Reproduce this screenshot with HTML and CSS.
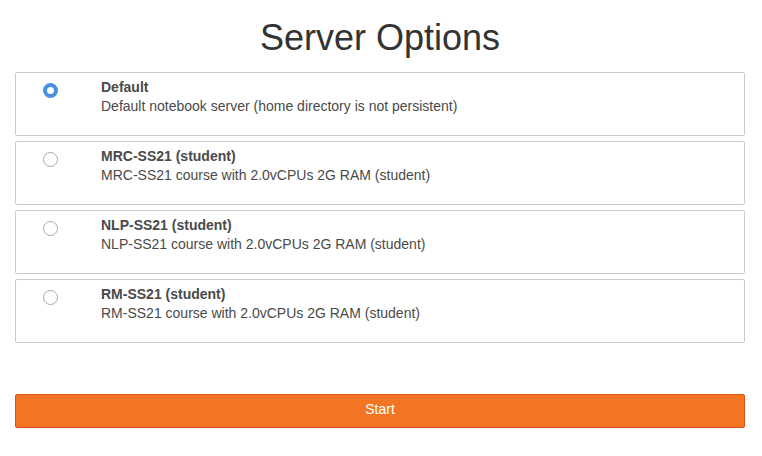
FILE: index.html
```html
<!DOCTYPE html>
<html>
<head>
<meta charset="utf-8">
<link rel="stylesheet" href="styles.css">
</head>
<body>
<div class="container">
  <h1 class="title">Server Options</h1>
  <form class="options">
    <label class="option">
      <span class="radio checked"></span>
      <span class="text">
        <strong class="name">Default</strong>
        <span class="desc">Default notebook server (home directory is not persistent)</span>
      </span>
    </label>
    <label class="option">
      <span class="radio"></span>
      <span class="text">
        <strong class="name">MRC-SS21 (student)</strong>
        <span class="desc">MRC-SS21 course with 2.0vCPUs 2G RAM (student)</span>
      </span>
    </label>
    <label class="option">
      <span class="radio"></span>
      <span class="text">
        <strong class="name">NLP-SS21 (student)</strong>
        <span class="desc">NLP-SS21 course with 2.0vCPUs 2G RAM (student)</span>
      </span>
    </label>
    <label class="option">
      <span class="radio"></span>
      <span class="text">
        <strong class="name">RM-SS21 (student)</strong>
        <span class="desc">RM-SS21 course with 2.0vCPUs 2G RAM (student)</span>
      </span>
    </label>
    <button type="button" class="start">Start</button>
  </form>
</div>
</body>
</html>
```

FILE: styles.css
```css
* { box-sizing: border-box; }
html, body {
  margin: 0;
  padding: 0;
  background: #fff;
}
body {
  font-family: "Liberation Sans", Arial, Helvetica, sans-serif;
  font-size: 14px;
  line-height: 20px;
  color: #333;
}
.container {
  padding: 0 17px 0 15px;
}
.title {
  margin: 18px 0 14px;
  font-size: 36px;
  line-height: 40px;
  font-weight: 400;
  text-align: center;
  color: #333;
}
.options {
  display: flex;
  flex-direction: column;
  gap: 5px;
}
.option {
  display: flex;
  align-items: flex-start;
  height: 64px;
  border: 1px solid #ccc;
  border-radius: 2px;
  padding: 4px 0 0 0;
}
.radio {
  flex: none;
  width: 15px;
  height: 15px;
  margin: 6px 0 0 27px;
  border-radius: 50%;
  border: 1px solid #a9a9a9;
  background: #fff;
}
.radio.checked {
  border: 4px solid #4a90e2;
  background: #fff;
}
.text {
  display: flex;
  flex-direction: column;
  margin-left: 43px;
}
.name {
  font-weight: 700;
  color: #4a4a4a;
  line-height: 20px;
}
.desc {
  color: #4a4a4a;
  line-height: 20px;
  margin-top: -1px;
}
.start {
  margin-top: 46px;
  height: 34px;
  width: 100%;
  background: #f37524;
  border: 1px solid #e0521c;
  border-radius: 2px;
  color: #fff;
  font-family: "Liberation Sans", Arial, sans-serif;
  font-size: 14px;
  padding: 0 0 4px;
}
```
